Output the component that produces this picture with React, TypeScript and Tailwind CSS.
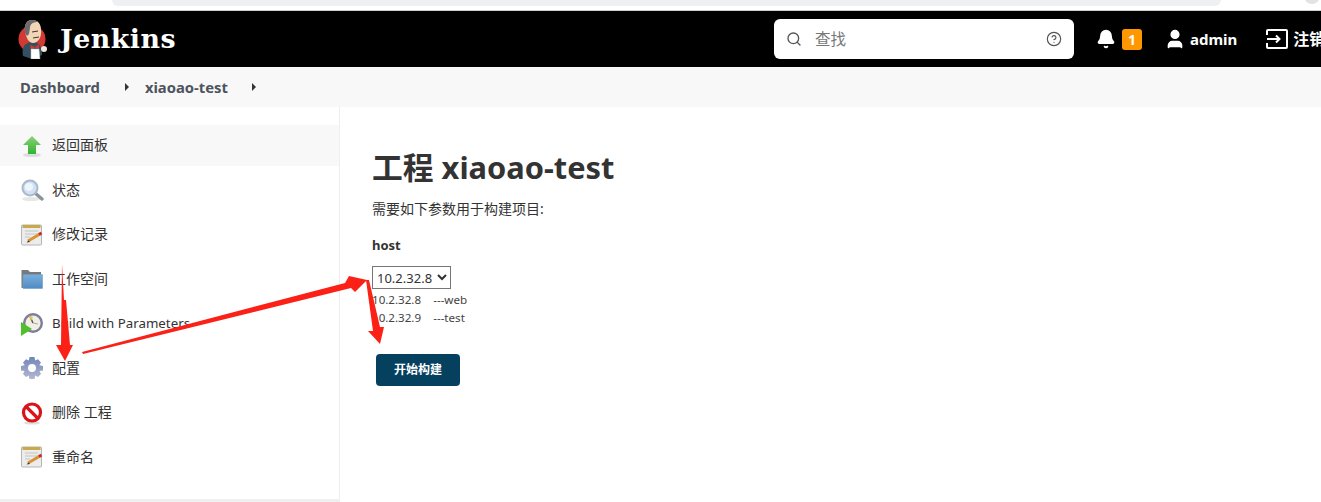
import { Bell, CircleHelp, Search, User } from 'lucide-react';
import type { ReactNode } from 'react';

const FONT = '"Noto Sans", "Noto Sans CJK SC", sans-serif';

function ArrowUpIcon() {
  return (
    <svg width="24" height="24" viewBox="0 0 24 24">
      <defs>
        <linearGradient id="up" x1="0" y1="0" x2="0" y2="1">
          <stop offset="0" stopColor="#8fcf7c" />
          <stop offset="1" stopColor="#2fb52c" />
        </linearGradient>
      </defs>
      <ellipse cx="12" cy="21" rx="9" ry="2" fill="#ddd" />
      <path d="M12 2 L21 11 H16 V20 H8 V11 H3 Z" fill="url(#up)" />
    </svg>
  );
}

function SearchIcon() {
  return (
    <svg width="24" height="24" viewBox="0 0 24 24">
      <ellipse cx="11" cy="21" rx="9" ry="2" fill="#e6e6e6" />
      <path d="M15 15 L22 21" stroke="#8d939b" strokeWidth="3.4" strokeLinecap="round" />
      <circle cx="10" cy="10" r="7.5" fill="#cfe2f3" stroke="#a9b9c9" strokeWidth="2" />
      <circle cx="9" cy="9" r="4" fill="#eef6fc" />
    </svg>
  );
}

function NotepadIcon() {
  return (
    <svg width="24" height="24" viewBox="0 0 24 24">
      <rect x="1.5" y="2" width="20" height="20" rx="1" fill="#ececec" stroke="#b5b5b5" />
      <rect x="2.5" y="2" width="18" height="3" fill="#c9a94c" />
      <path d="M5 8 H18 M5 11 H18 M5 14 H10" stroke="#c4c4c4" strokeWidth="1" />
      <path d="M8 18 L20 11" stroke="#d8932f" strokeWidth="3" />
      <path d="M19 11.5 L21.5 10" stroke="#c92a2a" strokeWidth="3" />
      <path d="M8.5 17.5 L6.5 19.5 L10 19 Z" fill="#333" />
    </svg>
  );
}

function FolderIcon() {
  return (
    <svg width="24" height="24" viewBox="0 0 24 24">
      <defs>
        <linearGradient id="folder" x1="0" y1="0" x2="0" y2="1">
          <stop offset="0" stopColor="#79aedb" />
          <stop offset="1" stopColor="#4f8cc4" />
        </linearGradient>
      </defs>
      <path d="M1.5 3 H8 L10 5 H21 V21 H1.5 Z" fill="#77797c" />
      <rect x="3" y="7.5" width="19.5" height="14" rx="0.5" fill="url(#folder)" stroke="#6d9cc6" strokeWidth="0.6" />
    </svg>
  );
}

function ClockIcon() {
  return (
    <svg width="24" height="24" viewBox="0 0 24 24">
      <circle cx="13" cy="11" r="10" fill="#7d7d98" />
      <circle cx="13" cy="11" r="7.6" fill="#f1efe4" />
      <path d="M13 11 L10 4.5" stroke="#555" strokeWidth="1.5" />
      <path d="M9 3.5 L13 5 L11 9 Z" fill="#e5c55a" />
      <path d="M13 11 L18 12" stroke="#aaa" strokeWidth="1" />
      <path d="M1 10 L12 17 L1 24 Z" fill="#4fbf2c" />
    </svg>
  );
}

function GearIcon() {
  return (
    <svg width="24" height="24" viewBox="0 0 24 24">
      <defs>
        <linearGradient id="gear" x1="0" y1="0" x2="0" y2="1">
          <stop offset="0" stopColor="#6f88b8" />
          <stop offset="1" stopColor="#b4b7cf" />
        </linearGradient>
      </defs>
      <path
        d="M9.5 1 H14.5 L15.2 4.4 L18 3.2 L21 6.5 L19.3 9.2 L23 10 V14.5 L19.4 15 L21 18 L18 21 L15.2 19.6 L14.5 23 H9.5 L8.8 19.6 L6 21 L3 18 L4.6 15 L1 14.5 V10 L4.7 9.2 L3 6.5 L6 3.2 L8.8 4.4 Z"
        fill="url(#gear)"
      />
      <circle cx="12" cy="12" r="4" fill="#fff" />
    </svg>
  );
}

function NoIcon() {
  return (
    <svg width="24" height="24" viewBox="0 0 24 24">
      <ellipse cx="12" cy="22" rx="8" ry="1.6" fill="#ddd" />
      <circle cx="12" cy="11.5" r="8.5" fill="#fff" stroke="#d9141a" strokeWidth="3.2" />
      <path d="M6 5.5 L18 17.5" stroke="#d9141a" strokeWidth="3.2" />
    </svg>
  );
}

function JenkinsLogo() {
  return (
    <svg width="30" height="40" viewBox="0 0 30 40" className="shrink-0">
      <circle cx="14" cy="20" r="13.5" fill="#d33833" />
      <path d="M5 37 C3 27 8 23 15 23 C21 23 24 27 24 36 L14 40 Z" fill="#335061" />
      <path d="M7 12 C6 4 10 1 14 1 C20 1 23 5 23 11 C24 18 20 24 15 24 C11 24 8 19 7 12 Z" fill="#f0d6b7" />
      <path d="M7 14 C5 5 10 1 14 1 C17 1 19 2 20 3 C15 3 12 5 12 9 L11 15 L9 17 Z" fill="#6d6b6d" />
      <path d="M14 13 L20 12 M15 19 L21 18" stroke="#49312b" strokeWidth="1" />
      <path d="M12 26 L17 28 L21 25 L21 30 L17 28.5 L13 31 Z" fill="#d33833" />
      <path d="M13 30 H21 L22 40 H13 Z" fill="#fff" stroke="#bbb" strokeWidth="0.5" />
      <circle cx="26" cy="30" r="3" fill="#f0e8dc" />
    </svg>
  );
}

function SignOutIcon() {
  return (
    <svg width="22" height="20" viewBox="0 0 22 20" fill="none" stroke="white" strokeWidth="2" className="shrink-0">
      <path d="M1 6 V2 C1 1.4 1.4 1 2 1 H20 C20.6 1 21 1.4 21 2 V18 C21 18.6 20.6 19 20 19 H2 C1.4 19 1 18.6 1 18 V14" />
      <path d="M1 10 H13 M10 6.5 L13.5 10 L10 13.5" />
    </svg>
  );
}

function Caret() {
  return <span className="block h-0 w-0 border-y-[4px] border-l-[4px] border-y-transparent border-l-[#333]" />;
}

function NavItem({ icon, label, active, small }: { icon: ReactNode; label: string; active?: boolean; small?: boolean }) {
  return (
    <div className={`flex h-[41px] items-center pl-[20px] text-[#333] ${active ? 'bg-[#f8f8f8]' : ''}`}>
      <span className="mr-[8px] flex h-[24px] w-[24px] items-center justify-center">{icon}</span>
      <span className={small ? 'pt-[1px] text-[13.3px]' : 'pb-[2px] text-[14px]'}>{label}</span>
    </div>
  );
}

export default function App() {
  return (
    <div className="relative h-[502px] w-[1321px] overflow-hidden bg-white" style={{ fontFamily: FONT }}>
      {/* browser chrome remnant */}
      <div className="relative h-[11px] border-b border-[#cfcfcf] bg-white">
        <div className="ml-[112px] h-[6px] w-[1109px] rounded-b-[8px] bg-[#eef1f3]" />
        <div className="absolute left-[1304px] top-[-12px] h-[16px] w-[16px] rounded-full bg-[#e3e3e3]" />
      </div>

      <header className="flex h-[56px] items-center bg-black pl-[18px] text-white">
        <JenkinsLogo />
        <span
          className="ml-[12px] w-[120px] shrink-0 text-[26.8px] font-bold tracking-[0.5px]"
          style={{ fontFamily: '"DejaVu Serif", "Liberation Serif", serif' }}
        >
          Jenkins
        </span>
        <div className="ml-[594px] flex h-[40px] w-[300px] shrink-0 items-center rounded-[6px] bg-white pl-[12px] pr-[12px] text-[#777]">
          <Search size={16} strokeWidth={2} className="text-[#555]" />
          <span className="ml-[13px] flex-1 pt-[1px] text-[15.5px]">查找</span>
          <CircleHelp size={16} strokeWidth={1.75} className="text-[#555]" />
        </div>
        <Bell size={20} fill="white" strokeWidth={2} className="ml-[22px] shrink-0" />
        <span className="ml-[6px] flex h-[21px] w-[20px] shrink-0 items-center justify-center rounded-[3px] bg-[#ff9800] text-[14px] font-bold">
          1
        </span>
        <User size={22} fill="white" strokeWidth={2} className="ml-[22px] shrink-0" />
        <span className="ml-[4px] shrink-0 text-[15px] font-bold">admin</span>
        <span className="ml-[29px] shrink-0">
          <SignOutIcon />
        </span>
        <span className="ml-[5px] shrink-0 whitespace-nowrap text-[16px] font-bold">注销</span>
      </header>

      <nav className="flex h-[40px] items-center bg-[#f8f8f8] pl-[20px] text-[14.8px] font-bold text-[#4d545d]">
        <span>Dashboard</span>
        <span className="ml-[25px] mr-[16px]">
          <Caret />
        </span>
        <span>xiaoao-test</span>
        <span className="ml-[24px]">
          <Caret />
        </span>
      </nav>

      <div className="flex h-[395px]">
        <aside className="w-[340px] shrink-0 border-r border-[#eeeeee] pt-[18px]">
          <div className="flex flex-col gap-[3.5px]">
            <NavItem icon={<ArrowUpIcon />} label="返回面板" active />
            <NavItem icon={<SearchIcon />} label="状态" />
            <NavItem icon={<NotepadIcon />} label="修改记录" />
            <NavItem icon={<FolderIcon />} label="工作空间" />
            <NavItem icon={<ClockIcon />} label="Build with Parameters" small />
            <NavItem icon={<GearIcon />} label="配置" />
            <NavItem icon={<NoIcon />} label="删除 工程" />
            <NavItem icon={<NotepadIcon />} label="重命名" />
          </div>
        </aside>

        <main className="flex-1 pl-[32px] pt-[40px] text-[#333]">
          <h1 className="text-[30.8px] font-bold leading-[40px]">工程 xiaoao-test</h1>
          <p className="mt-[12px] text-[14px] leading-[20px]">需要如下参数用于构建项目:</p>
          <div className="mt-[16px] text-[13px] font-bold leading-[20px]">host</div>
          <select
            defaultValue="10.2.32.8"
            className="mt-[11px] block h-[23px] w-[79px] appearance-auto border border-[#767676] bg-white text-[13px] leading-none"
          >
            <option>10.2.32.8</option>
            <option>10.2.32.9</option>
          </select>
          <div className="mt-[2px] text-[11.6px] leading-[18px] text-[#444]">
            <div className="whitespace-pre">10.2.32.8    ---web</div>
            <div className="whitespace-pre">10.2.32.9    ---test</div>
          </div>
          <button className="ml-[4px] mt-[27px] h-[32px] w-[84px] rounded-[4px] bg-[#05405f] text-[12px] font-bold text-white">
            开始构建
          </button>
        </main>
      </div>

      <div className="absolute bottom-0 left-0 h-[3px] w-[340px] bg-[#f0f0f0]" />

      {/* red annotation arrows drawn on top of the screenshot */}
      <svg className="pointer-events-none absolute left-0 top-0" width="1321" height="502" viewBox="0 0 1321 502">
        <path d="M62 264 L64 300 L66 300 L70 345 L73 345 L65 361 L56 345 L61 345 Z" fill="#fb2117" />
        <path d="M82 352 L345 283 L349 276 L367 280 L355 292 L351 288 L83 354 Z" fill="#fb2117" />
        <path d="M366 280 L369 280 L380 327 L384 327 L380 344 L368 331 L373 331 Z" fill="#fb2117" />
      </svg>
    </div>
  );
}
